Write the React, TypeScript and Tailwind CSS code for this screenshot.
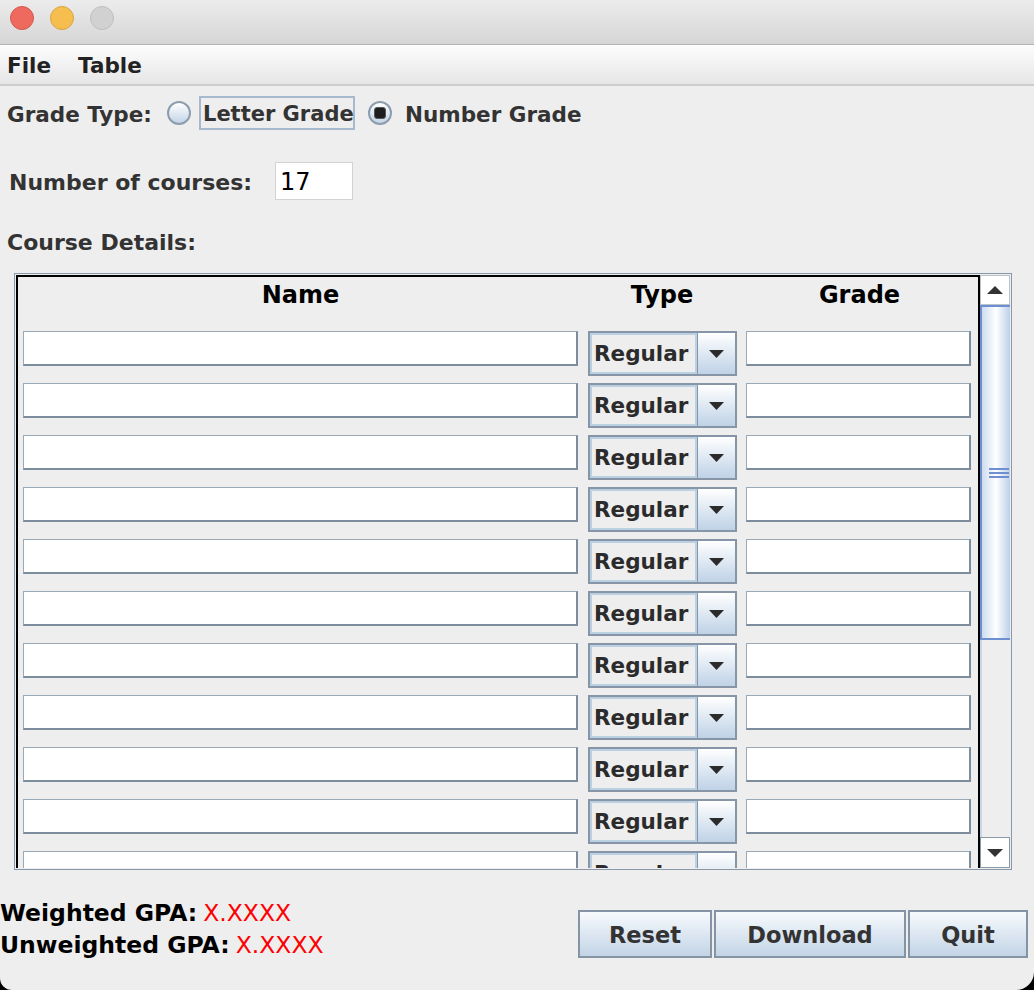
import { Fragment } from 'react'

// only the rows that fit in the viewport are drawn (17 courses in total)
const VISIBLE_ROWS = 11

// text field in the Swing aqua-ish look
function Field({ className = '' }: { className?: string }) {
  return (
    <div
      className={`h-[35px] bg-white border-t border-l border-[#9aa9b8] border-r-2 border-b-2 border-r-[#7d8d9d] border-b-[#7d8d9d] ${className}`}
    />
  )
}

function Combo() {
  return (
    <div className="ml-[5px] w-[149px] h-[45px] flex border-2 border-[#8796a6] bg-[#eeeeee]">
      <div className="flex-1 flex items-center pl-[2px] pt-[2px] border-2 border-[#bcd0e4] text-[#2b2b2b] font-bold text-[21.5px] whitespace-nowrap">
        Regular
      </div>
      <div className="w-[38px] flex items-center justify-center border-l border-[#8796a6] bg-gradient-to-b from-[#ffffff] to-[#bfd2e6]">
        <svg width="15" height="8" viewBox="0 0 15 8">
          <polygon points="0,0 15,0 7.5,8" fill="#2b2b2b" />
        </svg>
      </div>
    </div>
  )
}

function Radio({ checked }: { checked?: boolean }) {
  return (
    <div className="w-[24px] h-[24px] rounded-full border-2 border-[#8d9dad] bg-gradient-to-b from-[#ffffff] to-[#c2d4e6] flex items-center justify-center">
      {checked && <div className="w-[12px] h-[12px] rounded-[3px] bg-[#1e1e1e] border border-[#555]" />}
    </div>
  )
}

function Arrow({ up }: { up?: boolean }) {
  return (
    <svg width="16" height="8" viewBox="0 0 16 8">
      <polygon points={up ? '0,8 16,8 8,0' : '0,0 16,0 8,8'} fill="#333" />
    </svg>
  )
}

export default function App() {
  return (
    <div className="w-[1034px] h-[990px] bg-black overflow-hidden font-['DejaVu_Sans',sans-serif] text-[22px]">
      <div className="h-full bg-[#eeeeee] rounded-bl-[12px] rounded-br-[18px] flex flex-col overflow-hidden">
        {/* title bar */}
        <div className="h-[45px] shrink-0 flex items-start pt-[6px] pl-[10px] gap-[16px] bg-gradient-to-b from-[#ececec] to-[#d6d6d6] border-b border-[#b3b3b3]">
          <div className="w-[24px] h-[24px] rounded-full bg-[#ee6a5f] border border-[#d5574c]" />
          <div className="w-[24px] h-[24px] rounded-full bg-[#f5be4f] border border-[#d9a441]" />
          <div className="w-[24px] h-[24px] rounded-full bg-[#d1d1d1] border border-[#bfbfbf]" />
        </div>

        {/* menu bar */}
        <div className="h-[41px] shrink-0 flex items-center gap-[27px] pl-[7px] pt-[4px] bg-gradient-to-b from-[#fdfdfd] to-[#e6e6e6] border-b-2 border-[#cdcdcd] font-bold text-[#222] text-[21.5px]">
          <span>File</span>
          <span>Table</span>
        </div>

        {/* grade type */}
        <div className="mt-[10px] h-[34px] flex items-center text-[#333] font-bold whitespace-nowrap text-[21.5px]">
          <span className="ml-[7px] w-[160px] pt-[4px]">Grade Type:</span>
          <Radio />
          <div className="ml-[8px] w-[156px] h-[34px] border-2 border-[#a6b9cd] flex items-center pl-[2px] pt-[4px] text-[21px]">
            Letter Grade
          </div>
          <div className="ml-[13px]">
            <Radio checked />
          </div>
          <span className="ml-[13px] pt-[4px]">Number Grade</span>
        </div>

        {/* number of courses */}
        <div className="mt-[32px] h-[38px] flex items-center text-[#333] font-bold whitespace-nowrap">
          <span className="ml-[9px] w-[266px] pt-[3px]">Number of courses:</span>
          <div className="w-[78px] h-[38px] bg-white border border-[#d2d2d2] flex items-center pl-[4px] pt-[2px] text-[24px] font-normal text-black">
            17
          </div>
        </div>

        <div className="mt-[26px] h-[30px] flex items-center pl-[7px] pt-[3px] text-[#333] font-bold">Course Details:</div>

        {/* table in scroll pane */}
        <div className="mt-[17px] ml-[14px] w-[998px] h-[597px] shrink-0 border border-[#8a99a8] p-[1px] flex">
          <div className="w-[964px] border-l-2 border-t-2 border-r-2 border-black overflow-hidden">
            <div className="grid grid-cols-[565px_158px_237px] h-[36px] items-center text-center font-bold text-black text-[24px]">
              <span>Name</span>
              <span>Type</span>
              <span>Grade</span>
            </div>
            <div className="grid grid-cols-[565px_158px_237px] auto-rows-[52px] pt-[18px]">
              {Array.from({ length: VISIBLE_ROWS }).map((_, i) => (
                <Fragment key={i}>
                  <div className="pl-[5px] pr-[5px]">
                    <Field />
                  </div>
                  <div>
                    <Combo />
                  </div>
                  <div className="pl-[5px] pr-[7px]">
                    <Field />
                  </div>
                </Fragment>
              ))}
            </div>
          </div>

          {/* scrollbar */}
          <div className="flex-1 flex flex-col">
            <div className="h-[30px] bg-white border border-[#b9c3cd] flex items-center justify-center">
              <Arrow up />
            </div>
            <div className="h-[335px] border-t-2 border-b-2 border-l-2 border-[#6f90d0] bg-gradient-to-r from-[#cddcee] via-[#ffffff] to-[#bcd0e8] flex items-center justify-center">
              <div className="flex flex-col gap-[2px] ml-[6px]">
                <div className="w-[20px] h-[2px] bg-[#6f8fd0]" />
                <div className="w-[20px] h-[2px] bg-[#6f8fd0]" />
                <div className="w-[20px] h-[2px] bg-[#6f8fd0]" />
              </div>
            </div>
            <div className="flex-1 bg-[#eeeeee] border-l-2 border-[#c9d6ea]" />
            <div className="h-[31px] bg-white border border-[#8a99a8] flex items-center justify-center">
              <Arrow />
            </div>
          </div>
        </div>

        {/* bottom */}
        <div className="flex justify-between">
          <div className="mt-[28px] font-bold text-black text-[23.5px] whitespace-nowrap">
            <div className="h-[32px] flex items-center">
              Weighted GPA:<span className="ml-[6px] font-normal text-[#ff0000]">X.XXXX</span>
            </div>
            <div className="h-[32px] flex items-center">
              Unweighted GPA:<span className="ml-[6px] font-normal text-[#ff0000]">X.XXXX</span>
            </div>
          </div>
          <div className="mt-[40px] mr-[6px] flex gap-[2px] font-bold text-[#333] text-[22.5px] leading-none">
            {[
              ['Reset', 'w-[134px]'],
              ['Download', 'w-[192px]'],
              ['Quit', 'w-[120px]'],
            ].map(([label, w]) => (
              <div
                key={label}
                className={`${w} h-[48px] flex items-center justify-center pt-[3px] border-2 border-[#8494a5] bg-gradient-to-b from-[#f7fafd] to-[#c3d4e6]`}
              >
                {label}
              </div>
            ))}
          </div>
        </div>
      </div>
    </div>
  )
}
